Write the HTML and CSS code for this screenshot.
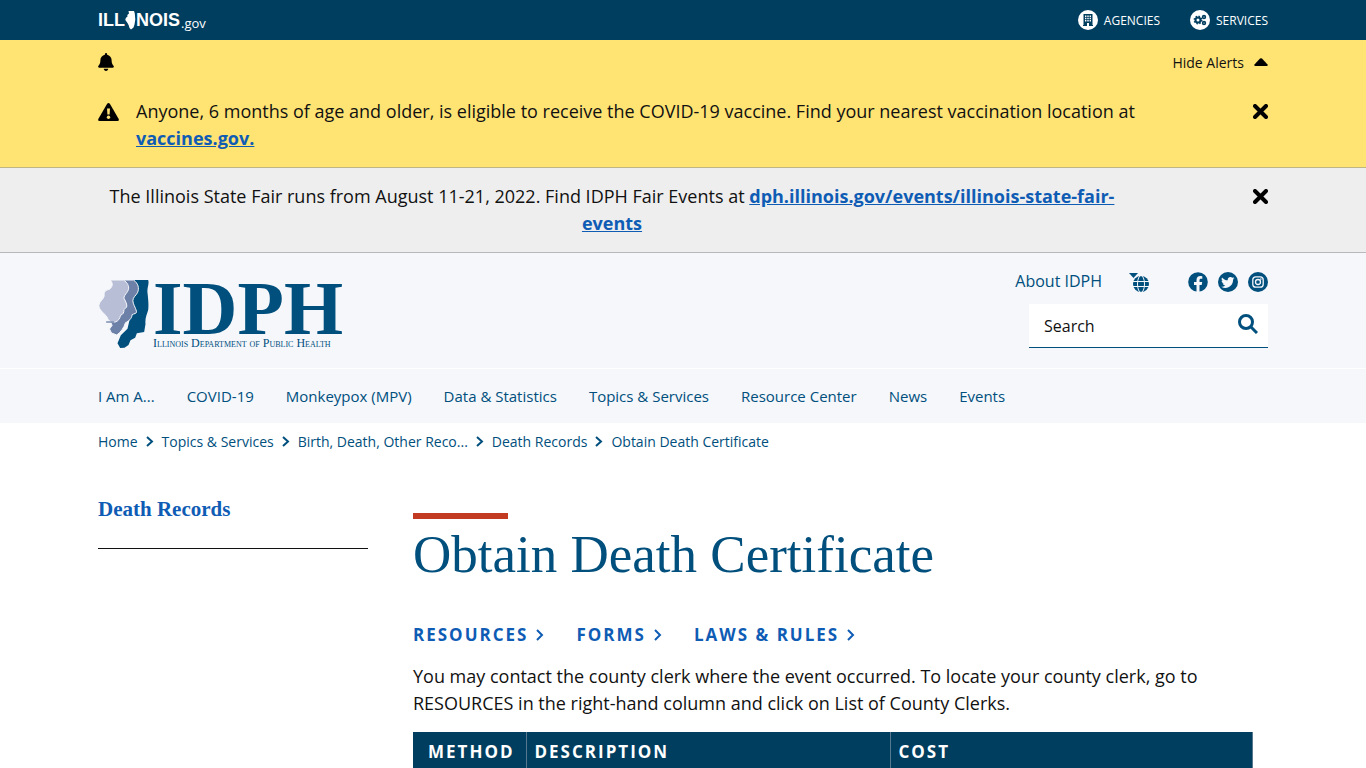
FILE: index.html
```html
<!DOCTYPE html>
<html lang="en">
  <head>
    <meta charset="utf-8">
    <meta name="viewport" content="width=device-width, initial-scale=1">
    <title>Obtain Death Certificate</title>
    <link rel="stylesheet" href="styles.css">
  </head>
  <body>
    <div class="topbar">
      <div class="container topbar-inner">
        <a class="state-logo" href="#" aria-label="Illinois.gov">
          <span class="state-name">ILL</span>
          <svg width="11" height="19" viewBox="0 0 11 19"><path fill="#fff" d="M3.500 0H9l.8 2.500.5 6-.8 5-1 3-2.500 2L4.500 17l-.7-2.500L2.500 12 .3 9l.5-2L2.500 5.500 2.300 4l1.700-1.500z"/></svg>
          <span class="state-name">NOIS</span>
          <span class="state-gov">.gov</span>
        </a>
        <nav class="topbar-links">
          <a href="#">
            <svg width="20" height="20" viewBox="0 0 20 20"><circle cx="10" cy="10" r="10" fill="#fff"/><path fill="#003e60" d="M5 16V15h.5V4h9v11h.5v1h-4v-3H9v3z"/><path fill="#fff" d="M7 5.500h1.400v1.400H7zm2.300 0h1.400v1.400H9.300zm2.300 0H13v1.400h-1.400zM7 7.800h1.400v1.400H7zm2.300 0h1.400v1.400H9.300zm2.300 0H13v1.400h-1.400zM7 10.100h1.400v1.400H7zm2.300 0h1.400v1.400H9.300zm2.300 0H13v1.400h-1.400z"/></svg>
            AGENCIES
          </a>
          <a href="#">
            <svg width="20" height="20" viewBox="0 0 20 20"><circle cx="10" cy="10" r="10" fill="#fff"/><g fill="none" stroke="#003e60"><circle cx="8" cy="10" r="2.500" stroke-width="2"/><circle cx="8" cy="10" r="3.800" stroke-width="1.400" stroke-dasharray="1.500 1.500"/><circle cx="14" cy="7" r="1.400" stroke-width="1.600"/><circle cx="14" cy="13" r="1.400" stroke-width="1.600"/></g></svg>
            SERVICES
          </a>
        </nav>
      </div>
    </div>

    <section class="alerts">
      <div class="alert-yellow">
        <div class="container">
          <div class="alert-head">
            <svg width="16" height="18" viewBox="0 0 448 512"><path d="M224 512c35 0 64-29 64-64H160c0 35 29 64 64 64zm215-149c-19-21-55-52-55-155 0-78-54-140-128-155V32a32 32 0 0 0-64 0v21C118 68 64 130 64 208c0 103-36 134-55 155a32 32 0 0 0 23 53h384a32 32 0 0 0 23-53z"/></svg>
            <button class="hide-alerts" type="button">
              Hide Alerts
              <svg width="14" height="8" viewBox="0 0 14 8"><path d="M0 7 6 0.500Q7 0 8 0.500L14 7 13 8H1z"/></svg>
            </button>
          </div>
          <div class="alert-row">
            <svg class="warn" width="21" height="18" viewBox="0 0 21 18"><path d="M9 1q1.500-2 3 0l8.700 15q.6 2-1.200 2h-18q-1.800 0-1.200-2z"/><path fill="#ffe373" d="M9 5.500h3l-.4 6H9.400z"/><circle cx="10.500" cy="14.300" r="1.700" fill="#ffe373"/></svg>
            <p class="alert-text">Anyone, 6 months of age and older, is eligible to receive the COVID-19 vaccine. Find your nearest vaccination location at <a href="#">vaccines.gov.</a></p>
            <button class="close" type="button" aria-label="Close alert">
              <svg width="15" height="15" viewBox="0 0 15 15"><path d="m2 2 11 11M13 2 2 13"/></svg>
            </button>
          </div>
        </div>
      </div>
      <div class="alert-grey">
        <div class="container alert-row">
          <p class="alert-text centered">The Illinois State Fair runs from August 11-21, 2022. Find IDPH Fair Events at <a href="#">dph.illinois.gov/events/illinois-state-fair-events</a></p>
          <button class="close" type="button" aria-label="Close alert">
            <svg width="15" height="15" viewBox="0 0 15 15"><path d="m2 2 11 11M13 2 2 13"/></svg>
          </button>
        </div>
      </div>
    </section>

    <header class="site-header">
      <div class="container header-inner">
        <a class="logo" href="#">
          <svg width="51" height="68" viewBox="6 6 152 204">
            <path fill="#004f7d" d="M108 6h48c4 12-4 22-2 38 2 20 4 34 2 52-4 14-10 26-8 42l-4 24-22 4-5 13-14 8-6 14-12 8-13 1-8-14 10-24 20-20 14-60z"/>
            <path fill="#6d80a8" stroke="#f5f7fb" stroke-width="3" d="M74 6h38c14 10 18 24 12 38-4 8-14 14-14 24 0 10 8 20 11 32 1 8-7 6-13 10-2 14-10 18-20 24-5 16-14 28-26 37l-16-6-6-12 8-11-6-12z"/>
            <path fill="#b8bed5" stroke="#f5f7fb" stroke-width="3" d="M42 6h40c12 8 17 18 15 28-2 10-13 16-14 26 4 8 9 16 9 24 0 6-7 8-9 11 1 8-2 14-10 17-2 10-6 17-16 20-12 2-20-2-24-14C23 104 8 96 8 82c2-12 14-18 16-28-1-12 4-18 16-20 9-7 12-18 2-28z"/>
            <path stroke="#6d80a8" stroke-width="4" d="M30 132h24"/>
          </svg>
          <span class="logo-words">
            <span class="logo-name">IDPH</span>
            <span class="logo-sub">Illinois Department of Public Health</span>
          </span>
        </a>
        <div class="header-tools">
          <div class="header-links">
            <a class="about" href="#">About IDPH</a>
            <a class="translate" href="#" aria-label="Translate">
              <svg width="20" height="20" viewBox="0 0 20 20"><path fill="#004f7d" d="M0 1h9L4.500 6z"/><circle cx="12" cy="12" r="8" fill="#004f7d"/><g fill="none" stroke="#f5f7fb"><ellipse cx="12" cy="12" rx="3.500" ry="8.500"/><path d="M3 9.500h17M3 14.500h17"/></g></svg>
            </a>
            <div class="social">
              <a href="#" aria-label="Facebook"><svg width="20" height="20" viewBox="0 0 20 20"><circle cx="10" cy="10" r="9.800" fill="#004f7d"/><path fill="#f5f7fb" d="M8.500 20v-7H6v-3h2.500V8c0-2.700 1.500-4 3.800-4l2 .2v2.500H13c-1.200 0-1.500.7-1.500 1.500V10h2.700l-.5 3h-2.200v7z"/></svg></a>
              <a href="#" aria-label="Twitter"><svg width="20" height="20" viewBox="0 0 20 20"><circle cx="10" cy="10" r="10" fill="#004f7d"/><path fill="#f5f7fb" d="M16.500 6.200l-1.400.4 1-1.400-1.700.6a2.800 2.800 0 0 0-4.700 2.500C7.300 8.200 5.300 7 4 5.400c-.8 1.400-.3 2.900.9 3.700l-1.300-.3c0 1.300 1 2.400 2.300 2.700l-1.300.1c.4 1.100 1.400 1.900 2.700 1.900-1.100.9-2.600 1.300-4.100 1.200 5.400 3.200 12-.2 11.900-7.100z"/></svg></a>
              <a href="#" aria-label="Instagram"><svg width="20" height="20" viewBox="0 0 20 20"><circle cx="10" cy="10" r="10" fill="#004f7d"/><g fill="none" stroke="#f5f7fb" stroke-width="1.300"><rect x="4.800" y="4.800" width="10.400" height="10.400" rx="3"/><circle cx="10" cy="10" r="2.500"/></g><circle cx="12.900" cy="7.100" r=".8" fill="#f5f7fb"/></svg></a>
            </div>
          </div>
          <form class="search">
            <input type="text" aria-label="Search" placeholder="Search">
            <button type="submit" aria-label="Submit search">
              <svg width="20" height="20" viewBox="0 0 20 20"><circle cx="8" cy="8" r="6.500"/><path d="m13 13 6 6"/></svg>
            </button>
          </form>
        </div>
      </div>
      <nav class="main-nav">
        <div class="container nav-inner">
          <a href="#">I Am A...</a>
          <a href="#">COVID-19</a>
          <a href="#">Monkeypox (MPV)</a>
          <a href="#">Data &amp; Statistics</a>
          <a href="#">Topics &amp; Services</a>
          <a href="#">Resource Center</a>
          <a href="#">News</a>
          <a href="#">Events</a>
        </div>
      </nav>
    </header>

    <div class="container">
      <nav class="breadcrumbs" aria-label="Breadcrumb">
        <a href="#">Home</a>
        <svg width="8" height="11" viewBox="0 0 8 11"><path d="m1 1 5 4.500-5 4.500"/></svg>
        <a href="#">Topics &amp; Services</a>
        <svg width="8" height="11" viewBox="0 0 8 11"><path d="m1 1 5 4.500-5 4.500"/></svg>
        <a href="#">Birth, Death, Other Reco...</a>
        <svg width="8" height="11" viewBox="0 0 8 11"><path d="m1 1 5 4.500-5 4.500"/></svg>
        <a href="#">Death Records</a>
        <svg width="8" height="11" viewBox="0 0 8 11"><path d="m1 1 5 4.500-5 4.500"/></svg>
        <a href="#">Obtain Death Certificate</a>
      </nav>

      <div class="page">
        <aside class="sidebar">
          <a href="#">Death Records</a>
        </aside>
        <main class="content">
          <h1>Obtain Death Certificate</h1>
          <div class="jump-links">
            <a href="#">RESOURCES <svg width="8" height="12" viewBox="0 0 8 12"><path d="m1 1 5 5-5 5"/></svg></a>
            <a href="#">FORMS <svg width="8" height="12" viewBox="0 0 8 12"><path d="m1 1 5 5-5 5"/></svg></a>
            <a href="#">LAWS &amp; RULES <svg width="8" height="12" viewBox="0 0 8 12"><path d="m1 1 5 5-5 5"/></svg></a>
          </div>
          <p>You may contact the county clerk where the event occurred. To locate your county clerk, go to RESOURCES in the right-hand column and click on List of County Clerks.</p>
          <table class="methods">
            <thead>
              <tr>
                <th class="col-method">METHOD</th>
                <th class="col-desc">DESCRIPTION</th>
                <th>COST</th>
              </tr>
            </thead>
          </table>
        </main>
      </div>
    </div>
  </body>
</html>
```

FILE: styles.css
```css
* {
  box-sizing: border-box;
}

body {
  margin: 0;
  font-family: "Open Sans", "Noto Sans", sans-serif;
  font-size: 18px;
  line-height: 27px;
  color: #111;
  background: #fff;
}

a {
  color: #004f7d;
  text-decoration: none;
}

button {
  padding: 0;
  border: 0;
  background: none;
  font-family: inherit;
  color: inherit;
  cursor: pointer;
}

svg {
  display: block;
  flex: none;
}

.container {
  max-width: 1170px;
  margin: 0 auto;
}

/* top bar */
.topbar {
  background: #003e60;
}

.topbar-inner {
  display: flex;
  justify-content: space-between;
  align-items: center;
  height: 40px;
}

.topbar a {
  color: #fff;
}

.state-logo {
  display: flex;
  align-items: center;
}

.state-name {
  font-family: "Liberation Sans", sans-serif;
  font-size: 18px;
  font-weight: bold;
}

.state-gov {
  padding: 5px 0 0 1px;
  font-size: 13px;
  line-height: 20px;
}

.topbar-links {
  display: flex;
  gap: 30px;
  font-size: 12px;
}

.topbar-links a {
  display: flex;
  align-items: center;
  gap: 6px;
}

/* alerts */
.alert-yellow {
  background: #ffe373;
  border-bottom: 1px solid #bfb583;
  padding-bottom: 15px;
}

.alert-head {
  display: flex;
  justify-content: space-between;
  align-items: center;
  height: 44px;
}

.hide-alerts {
  display: flex;
  align-items: center;
  gap: 10px;
  font-size: 14px;
}

.alert-row {
  display: flex;
  align-items: flex-start;
}

.alert-yellow .alert-row {
  padding-top: 14px;
}

.warn {
  margin: 5px 17px 0 0;
}

.alert-text {
  flex: 1;
  margin: 0;
}

.alert-text a {
  font-weight: bold;
  color: #0f5cb5;
  text-decoration: underline;
}

.centered {
  text-align: center;
}

.close {
  width: 142px;
  margin-top: 6px;
}

.alert-yellow .close {
  width: 100px;
}

.close svg {
  margin-left: auto;
  stroke: #000;
  stroke-width: 4;
  stroke-linecap: round;
}

.alert-grey {
  background: #eee;
  border-bottom: 1px solid #b9b9bd;
  padding: 15px 0;
}

/* header */
.site-header {
  background: #f5f7fb;
}

.header-inner {
  display: flex;
  justify-content: space-between;
  padding: 15px 0 19px;
}

.logo {
  display: flex;
  gap: 4px;
  padding-top: 12px;
}

.logo-words {
  display: flex;
  flex-direction: column;
  font-family: "Liberation Serif", serif;
}

.logo-name {
  font-size: 76px;
  font-weight: bold;
  line-height: 57px;
}

.logo-sub {
  font-size: 12px;
  font-variant: small-caps;
  line-height: 12px;
  white-space: nowrap;
}

.header-tools {
  display: flex;
  flex-direction: column;
  align-items: flex-end;
  gap: 9px;
}

.header-links {
  display: flex;
  align-items: center;
  font-size: 16px;
}

.translate {
  margin: 0 39px 0 27px;
}

.social {
  display: flex;
  gap: 10px;
}

.search {
  display: flex;
  width: 239px;
  height: 44px;
  background: #fff;
  border-bottom: 1px solid #004f7d;
}

.search input {
  flex: 1;
  min-width: 0;
  padding: 0 15px;
  border: 0;
  background: none;
  font-family: inherit;
  font-size: 16px;
}

.search input::placeholder {
  color: #111;
}

.search button {
  padding: 0 10px 4px;
}

.search svg {
  fill: none;
  stroke: #004f7d;
  stroke-width: 3;
}

.main-nav {
  border-top: 1px solid #fff;
}

.nav-inner {
  display: flex;
  flex-wrap: wrap;
  gap: 0 32px;
  padding: 14px 0 13px;
  font-size: 15px;
}

/* breadcrumbs */
.breadcrumbs {
  display: flex;
  flex-wrap: wrap;
  align-items: center;
  gap: 0 8px;
  padding-top: 5px;
  font-size: 14px;
}

.breadcrumbs svg {
  fill: none;
  stroke: #004f7d;
  stroke-width: 2;
}

/* page */
.page {
  display: flex;
  gap: 45px;
  padding: 41px 15px 0 0;
}

.sidebar {
  width: 270px;
  flex: none;
}

.sidebar a {
  display: block;
  padding-bottom: 25px;
  border-bottom: 1px solid #111;
  font-family: "Liberation Serif", serif;
  font-size: 21px;
  font-weight: bold;
  color: #0f5cb5;
}

.content {
  flex: 1;
  min-width: 0;
  padding-top: 17px;
}

h1 {
  margin: 0;
  font-family: "Liberation Serif", serif;
  font-size: 53px;
  font-weight: normal;
  line-height: 70px;
  color: #004f7d;
}

h1::before {
  content: "";
  display: block;
  width: 95px;
  height: 6px;
  background: #c23a22;
}

.jump-links {
  display: flex;
  flex-wrap: wrap;
  gap: 0 32px;
  margin-top: 32px;
  font-size: 17px;
  font-weight: bold;
  letter-spacing: 2px;
}

.jump-links a {
  display: flex;
  align-items: center;
  gap: 8px;
  color: #0f5cb5;
}

.jump-links svg {
  fill: none;
  stroke: #0f5cb5;
  stroke-width: 2;
}

.content p {
  margin: 15px 0;
}

.methods {
  width: 100%;
  border-collapse: collapse;
  table-layout: fixed;
  background: #003e60;
  color: #fff;
}

.methods th {
  padding: 6px 8px;
  border-right: 1px solid #56798f;
  font-size: 17px;
  text-align: left;
  letter-spacing: 2px;
}

.methods .col-method {
  width: 113px;
  padding-left: 15px;
}

.methods .col-desc {
  width: 364px;
}
```
